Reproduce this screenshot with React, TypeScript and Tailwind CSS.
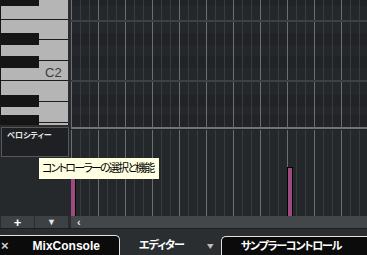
const jp = "font-['Liberation_Sans','Noto_Sans_CJK_JP',sans-serif] [font-feature-settings:'palt'] whitespace-nowrap";

const GRID_W = 296;

const GridLines = ({ height, rows }: { height: number; rows?: boolean }) => (
  <svg width={GRID_W} height={height} className="block">
    <defs>
      <pattern id={`cols-${height}`} width="27" height={height} patternUnits="userSpaceOnUse">
        <rect x="0" y="0" width="1" height={height} fill="#6b6e72" />
        <rect x="9" y="0" width="1" height={height} fill="#383b3f" />
        <rect x="18" y="0" width="1" height={height} fill="#383b3f" />
      </pattern>
    </defs>
    <rect width={GRID_W} height={height} fill="#25282b" />
    {rows &&
      [
        [0, 6],
        [33, 45],
        [56, 68],
        [95, 107],
        [115, 127],
      ].map(([a, b]) => <rect key={a} x="0" y={a} width={GRID_W} height={b - a} fill="#212326" />)}
    <rect width={GRID_W} height={height} fill={`url(#cols-${height})`} />
    {rows && (
      <>
        <rect x="0" y="20" width={GRID_W} height="2" fill="#3d4144" />
        <rect x="0" y="80" width={GRID_W} height="2" fill="#3d4144" />
      </>
    )}
  </svg>
);

const Keyboard = () => (
  <div className="relative w-[68px] h-[125px] bg-[#b5b5b5] border-l border-[#161616]">
    <svg width="67" height="125" className="block">
      {[19, 39, 60, 80, 101, 122].map((y) => (
        <rect key={y} x="0" y={y} width="67" height="1" fill="#1c1c1c" />
      ))}
      {[
        [0, 6],
        [33, 45],
        [56, 68],
        [95, 107],
        [115, 125],
      ].map(([a, b]) => (
        <rect key={a} x="0" y={a} width="38" height={b - a} fill="#151515" />
      ))}
    </svg>
    <span className="absolute left-[44px] top-[66px] text-[13px] leading-none text-[#3b3b3b] font-['Liberation_Sans',sans-serif]">
      C2
    </span>
  </div>
);

export default function App() {
  return (
    <div className="relative w-[367px] h-[255px] overflow-hidden bg-[#2a2d30] grid grid-cols-[71px_296px] grid-rows-[127px_89px_12px_27px] font-['Liberation_Sans',sans-serif]">
      {/* key editor */}
      <div className="bg-[#2a2c2f]">
        <Keyboard />
      </div>
      <div>
        <GridLines height={127} rows />
      </div>

      {/* controller lane */}
      <div className="bg-[#26292c] pl-[1px]">
        <div className={`w-[68px] h-[30px] border border-[#56595c] bg-[#1e2023] px-[5px] pt-[4px] text-[8px] leading-none font-bold text-[#e8e8e8] ${jp}`}>
          ベロシティー
        </div>
      </div>
      <div className="relative flex flex-col">
        <div className="h-[2px] bg-[#717477]" />
        <div className="h-[1px] bg-[#1f2124]" />
        <GridLines height={86} />
        <div className="absolute left-0 top-[38px] bottom-0 w-[5px] bg-[#9d4a80] border-r border-black" />
        <div className="absolute left-[216px] top-[40px] bottom-0 w-[6px] bg-[#9d4a80] border border-black border-b-0" />
      </div>

      {/* scroll strip */}
      <div className="flex gap-[1px] pl-[1px] pr-[3px] bg-[#2a2d30]">
        <div className="flex-1 flex items-center justify-center bg-[#3d4144] text-white text-[13px] font-bold leading-none">+</div>
        <div className="flex-1 flex items-center justify-center bg-[#3d4144] text-[#e6e6e6] text-[9px] leading-none">▼</div>
      </div>
      <div className="bg-[#43474a] flex items-center pl-[6px] text-[#e0e0e0] text-[11px] leading-none font-bold">‹</div>

      {/* tab bar */}
      <div className="col-span-2 flex items-end border-t border-[#1d1f21] bg-[#2b2e31]">
        <div className="ml-[-2px] w-[122px] h-[20px] flex items-center rounded-tr-[5px] border border-b-0 border-[#e2e2e2] bg-[#0b0b0b]">
          <span className="ml-[2px] text-[#cfcfcf] text-[13px] font-bold leading-none">×</span>
          <span className="ml-[24px] text-white text-[12px] font-bold leading-none">MixConsole</span>
        </div>
        <div className={`ml-[19px] h-[19px] flex items-center text-white text-[11px] font-bold leading-none tracking-[-1px] ${jp}`}>
          エディター
        </div>
        <div className="ml-[24px] h-[18px] flex items-center text-[#bdbdbd] text-[10px] leading-none scale-x-[1.3]">▾</div>
        <div className={`ml-[8px] flex-1 h-[19px] flex items-center rounded-tl-[5px] border border-b-0 border-r-0 border-[#e2e2e2] bg-[#0b0b0b] pl-[19px] text-white text-[11px] font-bold leading-none tracking-[-1.2px] ${jp}`}>
          サンプラーコントロール
        </div>
      </div>

      {/* tooltip */}
      <div className={`absolute left-[39px] top-[158px] w-[120px] h-[21px] bg-[#ffffe1] flex items-center pl-[3px] text-[11px] leading-none text-black tracking-[-1.8px] ${jp}`}>
        コントローラーの選択と機能
      </div>
    </div>
  );
}
